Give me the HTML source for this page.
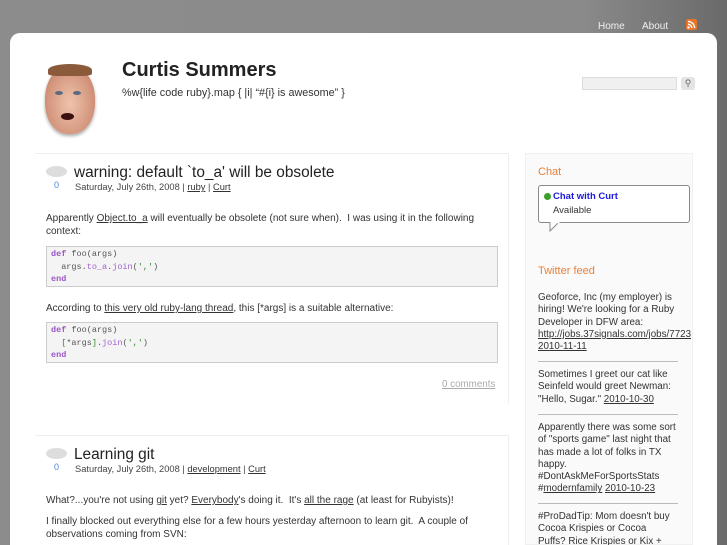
<!DOCTYPE html>
<html><head><meta charset="utf-8"><style>
*{margin:0;padding:0;box-sizing:border-box}
html,body{width:727px;height:545px;overflow:hidden}
body{background:linear-gradient(90deg,#8c8c8c 0%,#8a8a8a 80%,#6a6a6a 100%);font-family:"Liberation Sans",sans-serif;color:#333;position:relative}
a{color:#333}
.nav{position:absolute;top:21px;font-size:10px;color:#f0f0f0}
.panel{position:absolute;left:10px;top:33px;width:707px;height:512px;background:#fff;border-radius:10px 10px 0 0}
.ab{position:absolute}
.code{position:absolute;left:46px;width:452px;background:#f4f4f4;border:1px solid #ccc;font-family:"Liberation Mono",monospace;font-size:8.5px;line-height:12.5px;padding:1px 4px;color:#555}
.k{color:#9b55c8;font-weight:bold}.m{color:#a060d0}.s{color:#2a8a2a}
.p{font-size:10px;line-height:13px;color:#333}
.meta{font-size:9.3px;color:#444}
.tw{font-size:9.8px;line-height:12.3px;color:#333}
.hr{position:absolute;left:538px;width:140px;border-top:1px solid #bbb}
</style></head><body>
<div class="nav" style="left:598px">Home</div>
<div class="nav" style="left:642px">About</div>
<svg class="ab" style="left:686px;top:19px" width="11" height="11" viewBox="0 0 11 11"><rect width="11" height="11" rx="2" fill="#e8742a"/><circle cx="2.5" cy="8.5" r="1.2" fill="#fff"/><path d="M2 5.2A4 4 0 0 1 5.8 9M2 2.4A6.8 6.8 0 0 1 8.6 9" stroke="#fff" stroke-width="1.4" fill="none"/></svg>
<div class="panel"></div>
<!-- face -->
<div class="ab" style="left:45px;top:66px;width:50px;height:68px;border-radius:48% 48% 45% 45%;background:radial-gradient(ellipse at 50% 55%,#f0c4ac,#d09078 70%,#a06050);box-shadow:0 2px 3px #aaa"></div>
<div class="ab" style="left:48px;top:64px;width:44px;height:12px;border-radius:50% 50% 20% 20%;background:#8a5a3a"></div>
<div class="ab" style="left:55px;top:91px;width:8px;height:4px;border-radius:50%;background:#5a6a80"></div>
<div class="ab" style="left:73px;top:91px;width:8px;height:4px;border-radius:50%;background:#5a6a80"></div>
<div class="ab" style="left:61px;top:113px;width:13px;height:7px;border-radius:50%;background:#3a1010"></div>
<div class="ab" style="left:122px;top:59px;font-size:20px;font-weight:bold;color:#222">Curtis Summers</div>
<div class="ab" style="left:122px;top:87px;font-size:10.8px;color:#333">%w{life code ruby}.map { |i| “#{i} is awesome” }</div>
<div class="ab" style="left:582px;top:77px;width:95px;height:13px;background:#f0f0f0;border:1px solid #ddd"></div>
<div class="ab" style="left:681px;top:77px;width:14px;height:13px;background:#e4e4e4;border-radius:3px;font-size:9px;color:#666;text-align:center;line-height:13px">⚲</div>
<div class="ab" style="left:35px;top:153px;width:473px;border-top:1px solid #eee"></div>
<div class="ab" style="left:508px;top:153px;height:250px;border-left:1px solid #eee"></div>
<!-- post 1 -->
<div class="ab" style="left:46px;top:166px;width:21px;height:11px;border-radius:50%;background:#ddd"></div>
<div class="ab" style="left:54px;top:180px;font-size:9px;color:#4a8ad0">0</div>
<div class="ab" style="left:74px;top:164px;font-size:15.4px;color:#222">warning: default `to_a' will be obsolete</div>
<div class="ab meta" style="left:75px;top:182px">Saturday, July 26th, 2008 | <a href="#">ruby</a> | <a href="#">Curt</a></div>
<div class="ab p" style="left:46px;top:212px;width:452px">Apparently <a href="#">Object.to_a</a> will eventually be obsolete (not sure when).&nbsp; I was using it in the following context:</div>
<div class="code" style="top:246px;height:41px"><span class="k">def</span> foo(args)<br>&nbsp; args.<span class="m">to_a</span>.<span class="m">join</span>(<span class="s">','</span>)<br><span class="k">end</span></div>
<div class="ab p" style="left:46px;top:302px">According to <a href="#">this very old ruby-lang thread</a>, this [*args] is a suitable alternative:</div>
<div class="code" style="top:322px;height:41px"><span class="k">def</span> foo(args)<br>&nbsp; <span class="s">[</span>*args<span class="s">]</span>.<span class="m">join</span>(<span class="s">','</span>)<br><span class="k">end</span></div>
<div class="ab" style="left:442px;top:379px;font-size:9.8px;color:#aaa;text-decoration:underline">0 comments</div>
<!-- post 2 -->
<div class="ab" style="left:35px;top:435px;width:473px;border-top:1px solid #eee"></div>
<div class="ab" style="left:508px;top:435px;height:110px;border-left:1px solid #eee"></div>
<div class="ab" style="left:46px;top:448px;width:21px;height:11px;border-radius:50%;background:#ddd"></div>
<div class="ab" style="left:54px;top:462px;font-size:9px;color:#4a8ad0">0</div>
<div class="ab" style="left:74px;top:446px;font-size:15.4px;color:#222">Learning git</div>
<div class="ab meta" style="left:75px;top:464px">Saturday, July 26th, 2008 | <a href="#">development</a> | <a href="#">Curt</a></div>
<div class="ab p" style="left:46px;top:494px">What?...you're not using <a href="#">git</a> yet? <a href="#">Everybody</a>'s doing it.&nbsp; It's <a href="#">all the rage</a> (at least for Rubyists)!</div>
<div class="ab p" style="left:46px;top:515px;width:440px">I finally blocked out everything else for a few hours yesterday afternoon to learn git.&nbsp; A couple of observations coming from SVN:</div>
<!-- sidebar -->
<div class="ab" style="left:525px;top:153px;width:168px;height:392px;background:#fafafa;border:1px solid #f0f0f0"></div>
<div class="ab" style="left:538px;top:166px;font-size:11px;color:#e8803a">Chat</div>
<div class="ab" style="left:538px;top:185px;width:152px;height:38px;border:1px solid #888;border-radius:3px;background:#fff"></div>
<svg class="ab" style="left:549px;top:222px" width="12" height="10"><path d="M1 0V9L9 1" fill="#fff" stroke="#888"/><rect x="1.5" y="0" width="9" height="1.2" fill="#fff"/></svg>
<div class="ab" style="left:544px;top:193px;width:7px;height:7px;border-radius:50%;background:#3aa02a"></div>
<div class="ab" style="left:553px;top:191px;font-size:9.5px;font-weight:bold;color:#1a1ae0">Chat with Curt</div>
<div class="ab" style="left:553px;top:205px;font-size:9.5px;color:#333">Available</div>
<div class="ab" style="left:538px;top:265px;font-size:11px;color:#e8803a">Twitter feed</div>
<div class="ab tw" style="left:538px;top:292px;width:185px">Geoforce, Inc (my employer) is<br>hiring! We're looking for a Ruby<br>Developer in DFW area:<br><a href="#">http://jobs.37signals.com/jobs/7723</a><br><a href="#">2010-11-11</a></div>
<div class="hr" style="top:361px"></div>
<div class="ab tw" style="left:538px;top:369px;width:150px">Sometimes I greet our cat like<br>Seinfeld would greet Newman:<br>"Hello, Sugar." <a href="#">2010-10-30</a></div>
<div class="hr" style="top:414px"></div>
<div class="ab tw" style="left:538px;top:422px;width:160px">Apparently there was some sort<br>of "sports game" last night that<br>has made a lot of folks in TX<br>happy.<br>#DontAskMeForSportsStats<br>#<a href="#">modernfamily</a> <a href="#">2010-10-23</a></div>
<div class="hr" style="top:503px"></div>
<div class="ab tw" style="left:538px;top:511px;width:160px">#ProDadTip: Mom doesn't buy<br>Cocoa Krispies or Cocoa<br>Puffs? Rice Krispies or Kix +</div>
</body></html>
